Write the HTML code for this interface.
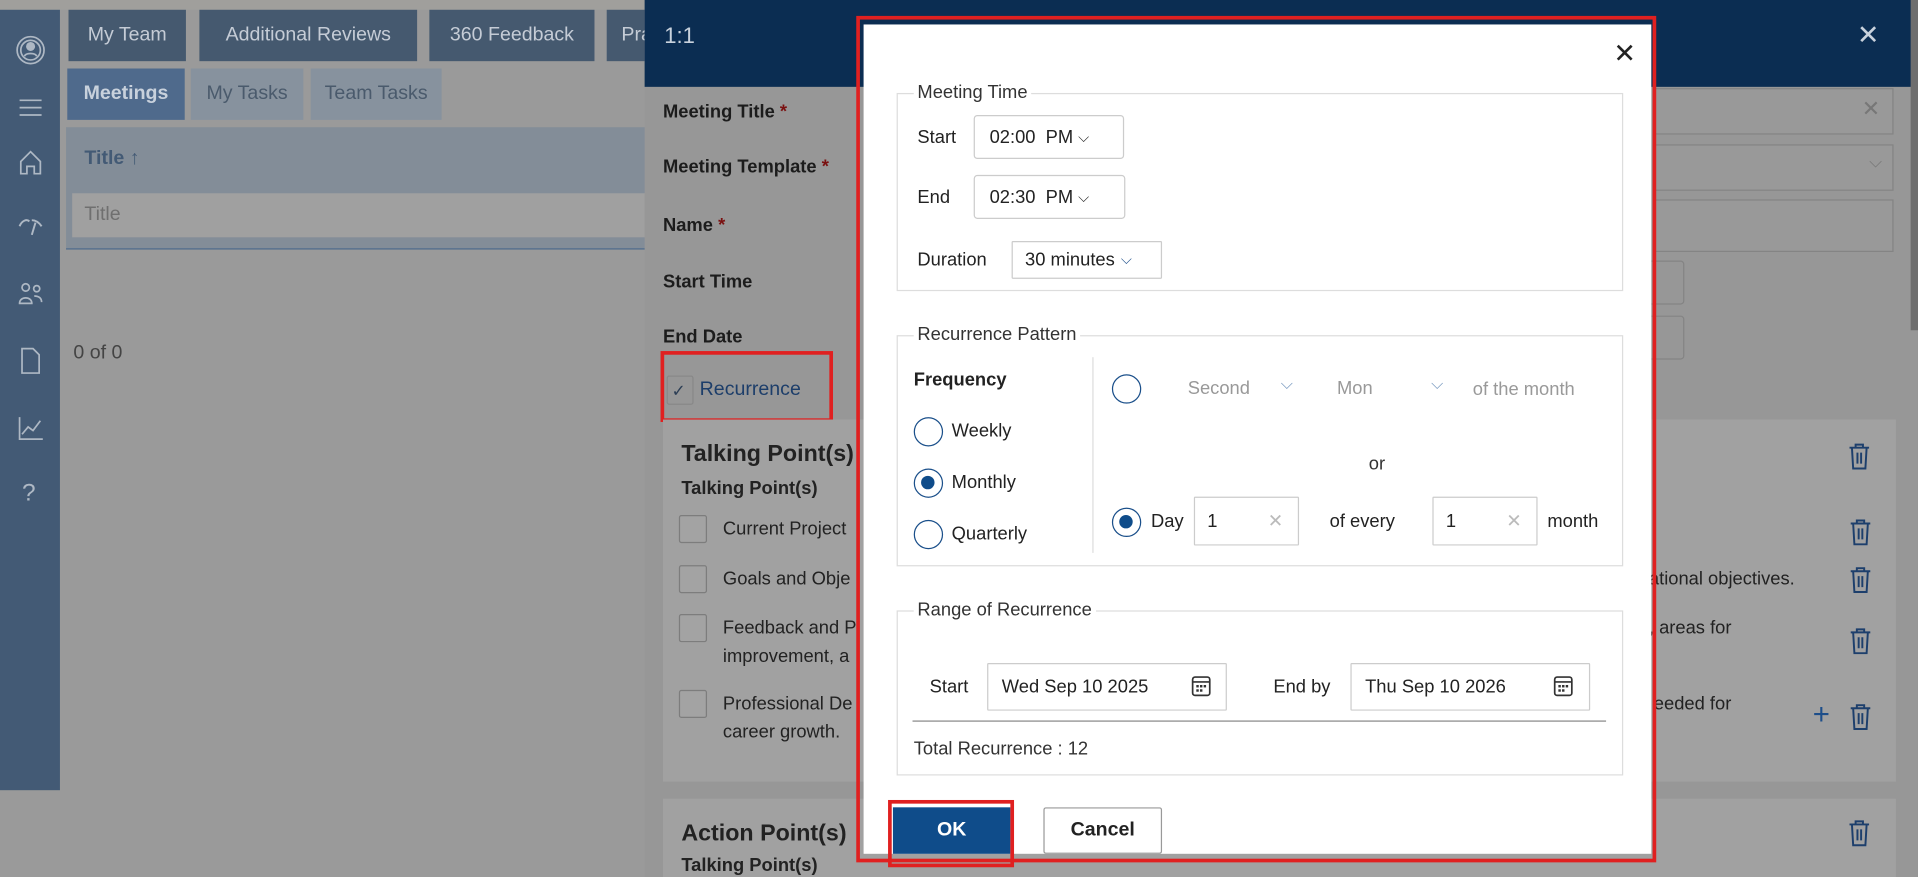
<!DOCTYPE html>
<html><head><meta charset="utf-8"><style>
*{box-sizing:border-box;margin:0;padding:0}
html,body{width:1918px;height:877px;overflow:hidden;background:#999}
#w{position:absolute;left:0;top:0;width:1568px;height:717px;transform:scale(1.22321);transform-origin:0 0;font-family:"Liberation Sans",sans-serif;font-size:15px;color:#222;background:#9a9a9a}
.a{position:absolute;white-space:nowrap}
.tab{position:absolute;color:#c5ccd6;font-size:16px;display:flex;align-items:center;justify-content:center}
.lbl{position:absolute;font-weight:bold;font-size:15px;color:#1c1c1c}
.cb{position:absolute;width:23px;height:23px;border:1px solid #7d7d7d;border-radius:2px;background:#a3a3a3}
.tp{position:absolute;font-size:15px;color:#222}
.fs{position:absolute;border:1px solid #ddd}
.lg{position:absolute;background:#fff;padding:0 3px;font-size:15px;color:#333;top:-10px;left:13px}
.inp{position:absolute;border:1px solid #ccc;border-radius:3px;background:#fff;font-size:15px;color:#222;display:flex;align-items:center}
.rad{position:absolute;width:24px;height:24px;border:1.5px solid #1a4f8a;border-radius:50%;background:#fff}
.rad.on::after{content:"";position:absolute;left:5px;top:5px;width:11px;height:11px;border-radius:50%;background:#0f4c8a}
.trash{position:absolute;width:18px;height:22px}
</style></head><body><div id="w">
<!-- top strip -->
<div class="a" style="left:0;top:0;width:1568px;height:8px;background:#a09f9c"></div>
<!-- sidebar -->
<div class="a" style="left:0;top:8px;width:49px;height:638px;background:#435a75"></div>
<svg class="a" style="left:12px;top:28px" width="26" height="26" viewBox="0 0 26 26" fill="none" stroke="#aeb8c4" stroke-width="1.4"><circle cx="13" cy="13" r="11"/><circle cx="13" cy="13" r="8"/><circle cx="13" cy="10" r="3" fill="#aeb8c4"/><path d="M8 18c1-3 9-3 10 0"/></svg>
<svg class="a" style="left:15px;top:80px" width="20" height="16" stroke="#aeb8c4" stroke-width="1.4"><path d="M1 2h18M1 8h18M1 14h18"/></svg>
<svg class="a" style="left:15px;top:122px" width="20" height="22" fill="none" stroke="#aeb8c4" stroke-width="1.4"><path d="M2 10L10 2l8 8v10h-5v-6H7v6H2z"/></svg>
<svg class="a" style="left:14px;top:176px" width="22" height="18" fill="none" stroke="#aeb8c4" stroke-width="1.6"><path d="M2 9c2-5 6-6 8-4M12 4c3 0 6 2 8 5M12 16l3-10"/></svg>
<svg class="a" style="left:14px;top:230px" width="22" height="22" fill="none" stroke="#aeb8c4" stroke-width="1.4"><circle cx="7" cy="5" r="3"/><circle cx="16" cy="6" r="2.5"/><path d="M2 18c0-6 10-6 10 0zM14 12c4 0 6 2 6 5"/></svg>
<svg class="a" style="left:16px;top:284px" width="18" height="22" fill="none" stroke="#aeb8c4" stroke-width="1.4"><path d="M2 1h9l5 5v15H2z"/></svg>
<svg class="a" style="left:14px;top:340px" width="22" height="20" fill="none" stroke="#aeb8c4" stroke-width="1.4"><path d="M2 1v18h19M4 15l5-6 4 3 6-8"/></svg>
<div class="a" style="left:18px;top:392px;color:#aeb8c4;font-size:20px">?</div>
<!-- tabs -->
<div class="tab" style="left:56px;top:8px;width:96px;height:42px;background:#45596f">My Team</div>
<div class="tab" style="left:163px;top:8px;width:178px;height:42px;background:#45596f">Additional Reviews</div>
<div class="tab" style="left:351px;top:8px;width:135px;height:42px;background:#45596f">360 Feedback</div>
<div class="tab" style="left:496px;top:8px;width:40px;height:42px;background:#45596f;justify-content:flex-start;padding-left:12px;overflow:hidden">Pra</div>
<div class="tab" style="left:55px;top:56px;width:96px;height:42px;background:#4f6a8c;color:#c8d1dc;font-weight:bold">Meetings</div>
<div class="tab" style="left:156px;top:56px;width:92px;height:42px;background:#87929e;color:#4a5a6c">My Tasks</div>
<div class="tab" style="left:254px;top:56px;width:107px;height:42px;background:#87929e;color:#4a5a6c">Team Tasks</div>
<div class="a" style="left:54px;top:104px;width:480px;height:100px;background:#838d98;border-bottom:1px solid #4d6a8c"></div>
<div class="a" style="left:69px;top:121px;color:#435a75;font-weight:bold;font-size:16px">Title ↑</div>
<div class="a" style="left:59px;top:158px;width:475px;height:36px;background:#a0a0a0"></div>
<div class="a" style="left:69px;top:167px;color:#6f6f6f;font-size:16px">Title</div>
<div class="a" style="left:60px;top:280px;color:#444;font-size:16px">0 of 0</div>
<!-- side panel -->
<div class="a" style="left:527px;top:0;width:1041px;height:717px;background:#979797"></div>
<div class="a" style="left:527px;top:0;width:1041px;height:71px;background:#0b2d52"></div>
<div class="a" style="left:543px;top:19px;color:#c9d2dd;font-size:18px">1:1</div>
<div class="a" style="left:1518px;top:16px;color:#c9d2dd;font-size:22px">✕</div>
<div class="a" style="left:1562px;top:0;width:6px;height:270px;background:#6e6e6e"></div>
<div class="lbl" style="left:542px;top:83px">Meeting Title <span style="color:#7a1010">*</span></div>
<div class="lbl" style="left:542px;top:128px">Meeting Template <span style="color:#7a1010">*</span></div>
<div class="lbl" style="left:542px;top:176px">Name <span style="color:#7a1010">*</span></div>
<div class="lbl" style="left:542px;top:222px">Start Time</div>
<div class="lbl" style="left:542px;top:267px">End Date</div>
<div class="a" style="left:1352px;top:72px;width:196px;height:38px;border:1px solid #848484;background:#999"></div>
<div class="a" style="left:1522px;top:79px;color:#777;font-size:18px">✕</div>
<div class="a" style="left:1352px;top:118px;width:196px;height:38px;border:1px solid #848484;background:#999"></div>
<div class="a" style="left:1528px;top:124px;color:#777;font-size:14px">⌵</div>
<div class="a" style="left:1352px;top:163px;width:196px;height:43px;border:1px solid #848484;background:#999"></div>
<div class="a" style="left:1345px;top:213px;width:32px;height:36px;border:1px solid #848484;border-radius:3px"></div>
<div class="a" style="left:1345px;top:258px;width:32px;height:36px;border:1px solid #848484;border-radius:3px"></div>
<div class="a" style="left:545px;top:307px;width:22px;height:24px;border:1px solid #888;border-radius:2px;color:#2c3e55;font-size:14px;padding-left:3px;padding-top:3px">✓</div>
<div class="a" style="left:572px;top:310px;color:#1d3e6a;font-size:16px">Recurrence</div>
<div class="a" style="left:540px;top:287px;width:141px;height:58px;border:3px solid #e02020"></div>
<!-- talking points card -->
<div class="a" style="left:542px;top:343px;width:1008px;height:296px;background:#a1a1a1"></div>
<div class="a" style="left:557px;top:361px;font-size:19px;font-weight:bold;color:#222">Talking Point(s)</div>
<div class="a" style="left:557px;top:391px;font-size:15px;font-weight:bold;color:#222">Talking Point(s)</div>
<div class="cb" style="left:555px;top:421px"></div><div class="tp" style="left:591px;top:424px">Current Project</div>
<div class="cb" style="left:555px;top:462px"></div><div class="tp" style="left:591px;top:465px">Goals and Obje</div>
<div class="cb" style="left:555px;top:502px"></div><div class="tp" style="left:591px;top:505px">Feedback and P</div><div class="tp" style="left:591px;top:528px">improvement, a</div>
<div class="cb" style="left:555px;top:564px"></div><div class="tp" style="left:591px;top:567px">Professional De</div><div class="tp" style="left:591px;top:590px">career growth.</div>
<div class="tp" style="left:1348px;top:465px">ational objectives.</div>
<div class="tp" style="left:1348px;top:505px">, areas for</div>
<div class="tp" style="left:1352px;top:567px">eeded for</div>
<div class="a" style="left:1482px;top:571px;color:#1d4e8a;font-size:24px">+</div>
<!-- action points card -->
<div class="a" style="left:542px;top:653px;width:1008px;height:64px;background:#a1a1a1"></div>
<div class="a" style="left:557px;top:671px;font-size:19px;font-weight:bold;color:#222">Action Point(s)</div>
<div class="a" style="left:557px;top:699px;font-size:15px;font-weight:bold;color:#222">Talking Point(s)</div>
<!-- trash icons -->
<svg width="0" height="0" style="position:absolute"><defs><symbol id="tr" viewBox="0 0 18 22"><g fill="none" stroke="#1d3f6c" stroke-width="1.6"><path d="M1 4h16M6 4V1.5h6V4M3 4l1 17h10l1-17M7.5 8v9M10.5 8v9"/></g></symbol></defs></svg>
<svg class="trash" style="left:1511px;top:362px"><use href="#tr"/></svg>
<svg class="trash" style="left:1512px;top:424px"><use href="#tr"/></svg>
<svg class="trash" style="left:1512px;top:463px"><use href="#tr"/></svg>
<svg class="trash" style="left:1512px;top:513px"><use href="#tr"/></svg>
<svg class="trash" style="left:1512px;top:575px"><use href="#tr"/></svg>
<svg class="trash" style="left:1511px;top:670px"><use href="#tr"/></svg>
<!-- modal -->
<div class="a" style="left:700px;top:13px;width:654px;height:692px;border:3px solid #e02020"></div>
<div class="a" style="left:706px;top:20px;width:644px;height:678px;background:#fff"></div>
<div class="a" style="left:1319px;top:31px;color:#222;font-size:22px">✕</div>
<div class="fs" style="left:733px;top:76px;width:594px;height:162px"><div class="lg">Meeting Time</div></div>
<div class="a" style="left:750px;top:104px">Start</div>
<div class="inp" style="left:796px;top:94px;width:123px;height:36px;padding-left:12px">02:00&nbsp; PM <span style="font-size:12px;margin-left:4px">&#x2335;</span></div>
<div class="a" style="left:750px;top:153px">End</div>
<div class="inp" style="left:796px;top:143px;width:124px;height:36px;padding-left:12px">02:30&nbsp; PM <span style="font-size:12px;margin-left:4px">&#x2335;</span></div>
<div class="a" style="left:750px;top:204px">Duration</div>
<div class="inp" style="left:827px;top:197px;width:123px;height:31px;padding-left:10px;border-radius:1px">30 minutes <span style="color:#1d4e8a;font-size:12px;margin-left:5px">&#x2335;</span></div>
<div class="fs" style="left:733px;top:274px;width:594px;height:189px"><div class="lg">Recurrence Pattern</div></div>
<div class="a" style="left:893px;top:292px;width:1px;height:160px;background:#ddd"></div>
<div class="a" style="left:747px;top:302px;font-weight:bold">Frequency</div>
<div class="rad" style="left:747px;top:341px"></div><div class="a" style="left:778px;top:344px">Weekly</div>
<div class="rad on" style="left:747px;top:383px"></div><div class="a" style="left:778px;top:386px">Monthly</div>
<div class="rad" style="left:747px;top:425px"></div><div class="a" style="left:778px;top:428px">Quarterly</div>
<div class="rad" style="left:909px;top:306px"></div>
<div class="a" style="left:971px;top:309px;color:#999">Second</div>
<div class="a" style="left:1047px;top:306px;color:#7a9ac0;font-size:13px">&#x2335;</div>
<div class="a" style="left:1093px;top:309px;color:#999">Mon</div>
<div class="a" style="left:1170px;top:306px;color:#7a9ac0;font-size:13px">&#x2335;</div>
<div class="a" style="left:1204px;top:310px;color:#999">of the month</div>
<div class="a" style="left:1119px;top:371px;color:#333">or</div>
<div class="rad on" style="left:909px;top:415px"></div>
<div class="a" style="left:941px;top:418px">Day</div>
<div class="inp" style="left:976px;top:406px;width:86px;height:40px;padding-left:10px;border-radius:1px">1<span style="position:absolute;right:12px;color:#bbb">✕</span></div>
<div class="a" style="left:1087px;top:418px">of every</div>
<div class="inp" style="left:1171px;top:406px;width:86px;height:40px;padding-left:10px;border-radius:1px">1<span style="position:absolute;right:12px;color:#bbb">✕</span></div>
<div class="a" style="left:1265px;top:418px">month</div>
<div class="fs" style="left:733px;top:499px;width:594px;height:135px"><div class="lg">Range of Recurrence</div></div>
<div class="a" style="left:760px;top:553px">Start</div>
<div class="inp" style="left:807px;top:542px;width:196px;height:39px;padding-left:11px;border-radius:1px">Wed Sep 10 2025</div>
<div class="a" style="left:1041px;top:553px">End by</div>
<div class="inp" style="left:1104px;top:542px;width:196px;height:39px;padding-left:11px;border-radius:1px">Thu Sep 10 2026</div>
<svg width="0" height="0" style="position:absolute"><defs><symbol id="cal" viewBox="0 0 16 18"><g fill="none" stroke="#333" stroke-width="1.4"><rect x="1" y="1.5" width="14" height="15" rx="2"/><path d="M1 5.5h14"/></g><g fill="#333"><rect x="4" y="8" width="2" height="2"/><rect x="7" y="8" width="2" height="2"/><rect x="10" y="8" width="2" height="2"/><rect x="4" y="11.5" width="2" height="2"/><rect x="7" y="11.5" width="2" height="2"/></g></symbol></defs></svg>
<svg class="a" style="left:974px;top:552px" width="16" height="18"><use href="#cal"/></svg>
<svg class="a" style="left:1270px;top:552px" width="16" height="18"><use href="#cal"/></svg>
<div class="a" style="left:746px;top:589px;width:567px;height:1px;background:#888"></div>
<div class="a" style="left:747px;top:604px;color:#333">Total Recurrence : 12</div>
<div class="a" style="left:730px;top:660px;width:96px;height:38px;background:#0f4c8a;color:#fff;font-weight:bold;font-size:16px;display:flex;align-items:center;justify-content:center">OK</div>
<div class="a" style="left:726px;top:654px;width:103px;height:55px;border:3px solid #e02020"></div>
<div class="a" style="left:853px;top:660px;width:97px;height:38px;border:1px solid #999;border-radius:2px;font-weight:bold;font-size:16px;display:flex;align-items:center;justify-content:center;color:#222">Cancel</div>
</div></body></html>
